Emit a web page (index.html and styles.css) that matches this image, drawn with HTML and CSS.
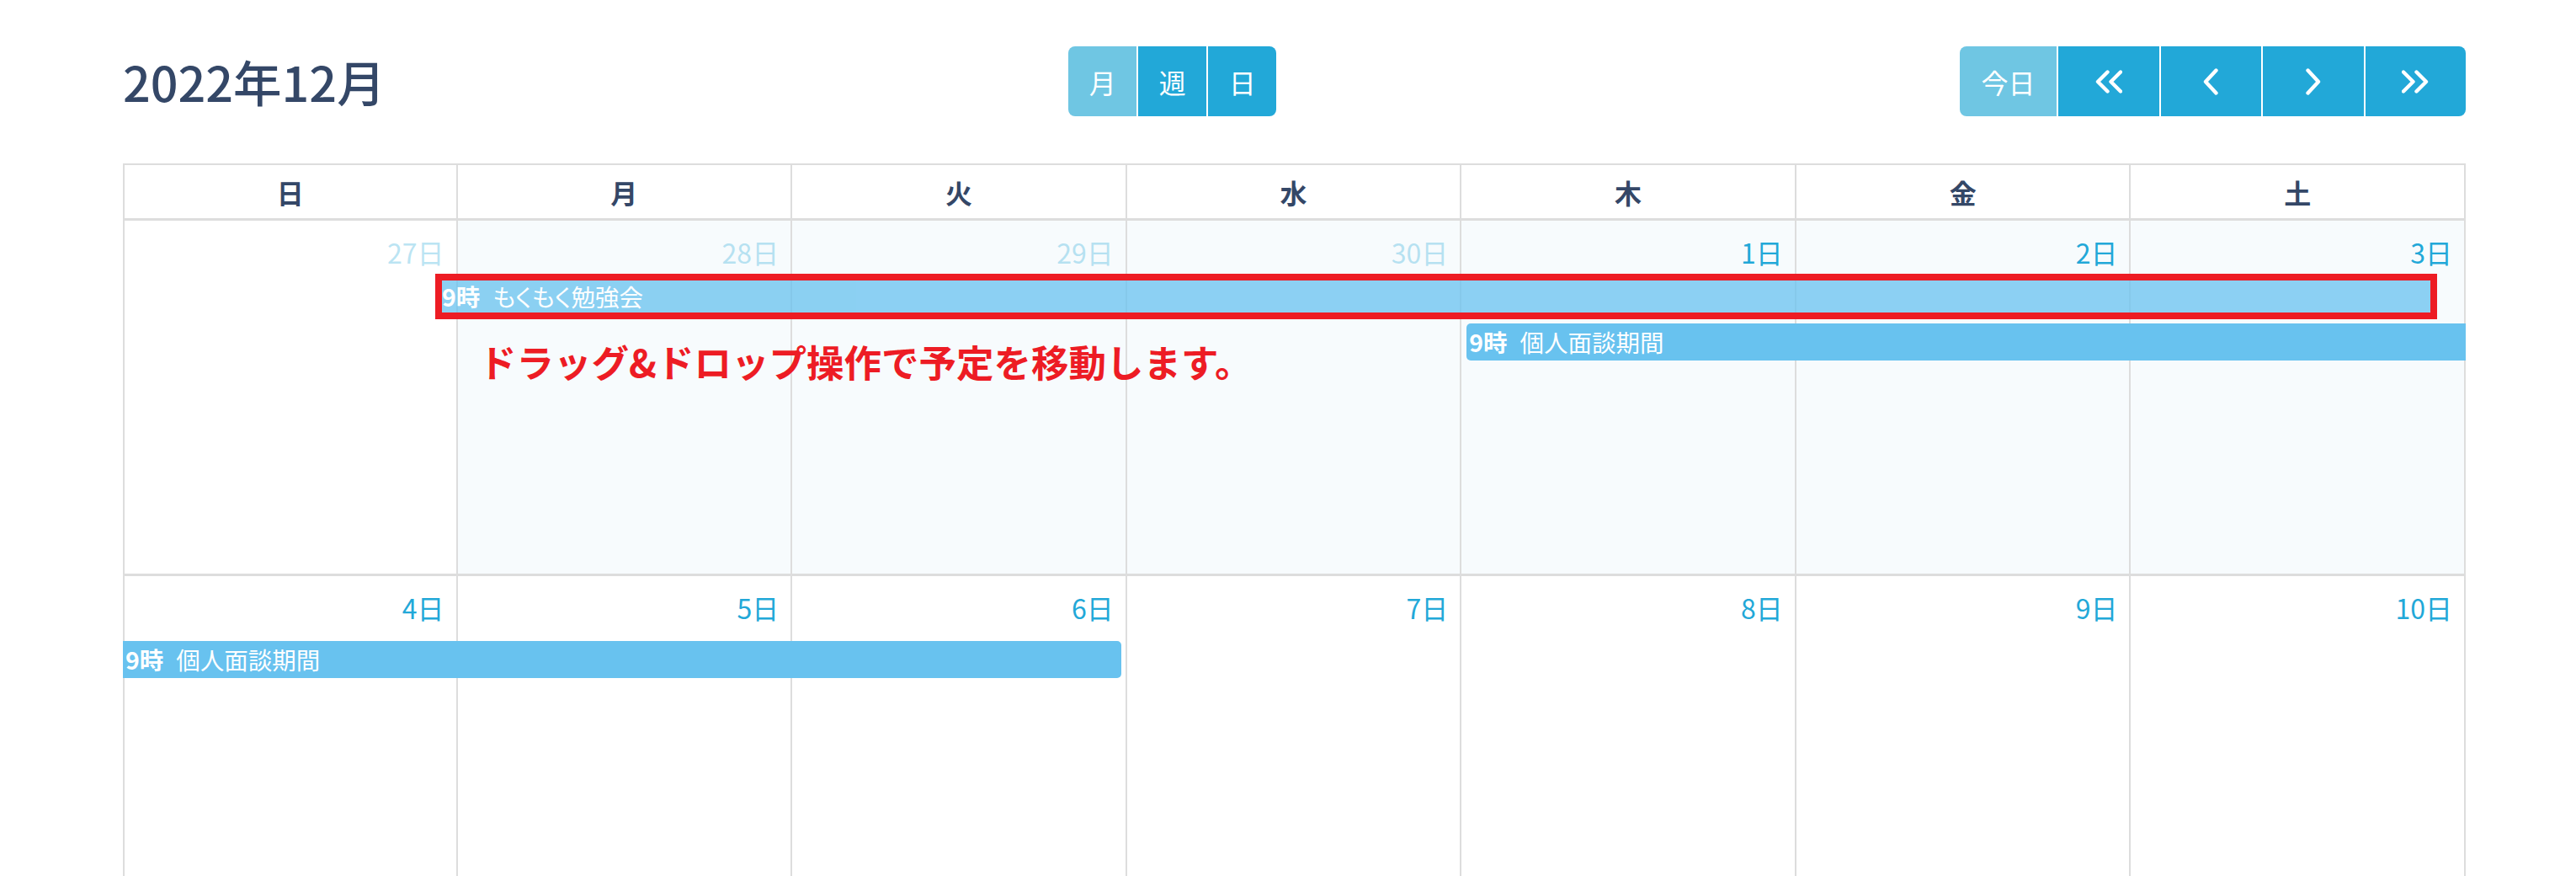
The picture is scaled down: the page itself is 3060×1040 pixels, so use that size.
FILE: index.html
```html
<!DOCTYPE html>
<html lang="ja">
<head>
<meta charset="utf-8">
<title>カレンダー</title>
<link rel="stylesheet" href="styles.css">
</head>
<body>
<div class="page">
  <div class="toolbar">
    <h2 class="title">2022年12月</h2>
    <div class="btn-group views">
      <button class="btn light">月</button><button class="btn">週</button><button class="btn">日</button>
    </div>
    <div class="btn-group nav">
      <button class="btn light today">今日</button>
      <button class="btn icon" aria-label="前年"><svg width="32" height="28" viewBox="0 0 32 28"><path d="M14.5 2.5 L3 14 L14.5 25.5 M30 2.5 L18.5 14 L30 25.5" fill="none" stroke="#fff" stroke-width="4.4" stroke-linecap="round" stroke-linejoin="round"/></svg></button>
      <button class="btn icon" aria-label="前月"><svg width="18" height="32" viewBox="0 0 18 32"><path d="M15.5 2.5 L3 16 L15.5 29.5" fill="none" stroke="#fff" stroke-width="4.4" stroke-linecap="round" stroke-linejoin="round"/></svg></button>
      <button class="btn icon" aria-label="次月"><svg width="18" height="32" viewBox="0 0 18 32"><path d="M2.5 2.5 L15 16 L2.5 29.5" fill="none" stroke="#fff" stroke-width="4.4" stroke-linecap="round" stroke-linejoin="round"/></svg></button>
      <button class="btn icon" aria-label="次年"><svg width="32" height="28" viewBox="0 0 32 28"><path d="M2 2.5 L13.5 14 L2 25.5 M17.5 2.5 L29 14 L17.5 25.5" fill="none" stroke="#fff" stroke-width="4.4" stroke-linecap="round" stroke-linejoin="round"/></svg></button>
    </div>
  </div>

  <div class="cal">
    <div class="head">
      <div class="th">日</div><div class="th">月</div><div class="th">火</div><div class="th">水</div><div class="th">木</div><div class="th">金</div><div class="th">土</div>
    </div>

    <div class="week">
      <div class="day"><span class="num other">27日</span></div>
      <div class="day hl"><span class="num other">28日</span></div>
      <div class="day hl"><span class="num other">29日</span></div>
      <div class="day hl"><span class="num other">30日</span></div>
      <div class="day hl"><span class="num">1日</span></div>
      <div class="day hl"><span class="num">2日</span></div>
      <div class="day hl"><span class="num">3日</span></div>
      <div class="event slot2 from-thu start"><b class="time">9時</b><span class="ttl">個人面談期間</span></div>
    </div>

    <div class="week">
      <div class="day"><span class="num">4日</span></div>
      <div class="day"><span class="num">5日</span></div>
      <div class="day"><span class="num">6日</span></div>
      <div class="day"><span class="num">7日</span></div>
      <div class="day"><span class="num">8日</span></div>
      <div class="day"><span class="num">9日</span></div>
      <div class="day"><span class="num">10日</span></div>
      <div class="event slot1 to-sat end"><b class="time">9時</b><span class="ttl">個人面談期間</span></div>
    </div>
  </div>

  <div class="mirror"><b class="time">9時</b><span class="ttl">もくもく勉強会</span></div>
  <div class="annot-box"></div>
  <div class="annot-text">ドラッグ&amp;ドロップ操作で予定を移動します。</div>
</div>
</body>
</html>
```

FILE: styles.css
```css
html, body {
  margin: 0;
  padding: 0;
  background: #fff;
}

body {
  font-family: "Noto Sans CJK JP", "Noto Sans", sans-serif;
  color: #344767;
  overflow: hidden;
}

.page {
  position: relative;
  padding: 55px 131px 0 146px;
  height: 985px;
  overflow: hidden;
}

/* toolbar */
.toolbar {
  display: flex;
  justify-content: space-between;
  align-items: center;
  height: 83px;
  margin-bottom: 56px;
}

.title {
  margin: 0;
  font-size: 57.5px;
  font-weight: 500;
  line-height: 1.2;
  color: #344767;
}

.btn-group {
  display: flex;
  gap: 2px;
  height: 83px;
}

.btn {
  border: none;
  margin: 0;
  padding: 0;
  height: 83px;
  background: #22a8d8;
  color: #fff;
  font-family: "Noto Sans CJK JP", sans-serif;
  font-size: 32px;
  line-height: 1;
  display: flex;
  align-items: center;
  justify-content: center;
}

.views .btn {
  width: 81px;
}

.btn.light {
  background: #6fc6e3;
}

.btn-group .btn:first-child {
  border-radius: 8px 0 0 8px;
}

.btn-group .btn:last-child {
  border-radius: 0 8px 8px 0;
}

.nav .today {
  width: 115px;
}

.nav .icon {
  width: 119.5px;
}

.btn svg {
  display: block;
}

/* calendar */
.cal {
  width: 2783px;
}

.head {
  display: grid;
  grid-template-columns: repeat(7, minmax(0, 1fr));
  border-top: 2px solid #ddd;
  border-bottom: 3px solid #ddd;
}

.th {
  height: 63px;
  display: flex;
  align-items: center;
  justify-content: center;
  font-size: 32px;
  font-weight: 700;
  color: #344767;
  border-right: 2px solid #ddd;
}

.th:first-child {
  border-left: 2px solid #ddd;
}

.week {
  display: grid;
  grid-template-columns: repeat(7, minmax(0, 1fr));
  grid-template-rows: 77px 45px 45px 1fr;
  height: 419px;
  border-bottom: 3px solid #ddd;
}

.day {
  grid-row: 1 / -1;
  border-right: 2px solid #ddd;
  display: flex;
  justify-content: flex-end;
  align-items: flex-start;
  padding: 13px 14px 0 0;
  min-width: 0;
}

.day:nth-child(1) { grid-column: 1; border-left: 2px solid #ddd; }
.day:nth-child(2) { grid-column: 2; }
.day:nth-child(3) { grid-column: 3; }
.day:nth-child(4) { grid-column: 4; }
.day:nth-child(5) { grid-column: 5; }
.day:nth-child(6) { grid-column: 6; }
.day:nth-child(7) { grid-column: 7; }

.day.hl {
  background: #f7fbfd;
}

.num {
  font-size: 32px;
  line-height: 48px;
  color: #22a8d8;
}

.num.other {
  opacity: 0.3;
}

/* events */
.event,
.mirror {
  height: 44px;
  background: #68c2ef;
  color: #fff;
  font-size: 28.5px;
  font-feature-settings: "palt";
  line-height: 44px;
  white-space: nowrap;
  overflow: hidden;
  display: flex;
  align-items: center;
  padding: 0 3px;
  box-sizing: border-box;
  min-width: 0;
}

.event {
  align-self: start;
  z-index: 1;
}

.slot1 { grid-row: 2; }
.slot2 { grid-row: 3; }

.from-thu { grid-column: 5 / 8; margin-left: 6px; }
.to-sat { grid-column: 1 / 4; margin-right: 7px; }

.event.start { border-radius: 5px 0 0 5px; }
.event.end { border-radius: 0 5px 5px 0; }

.time {
  font-weight: 700;
  margin-right: 15px;
}

/* dragged mirror & annotation overlays */
.mirror {
  position: absolute;
  left: 522px;
  top: 330px;
  width: 2365px;
  opacity: 0.75;
  border-radius: 5px;
  z-index: 3;
}

.annot-box {
  position: absolute;
  left: 517px;
  top: 325px;
  width: 2378px;
  height: 54px;
  box-sizing: border-box;
  border: 8px solid #ed1c24;
  z-index: 4;
}

.annot-text {
  position: absolute;
  left: 569px;
  top: 402px;
  font-size: 44.5px;
  line-height: 54px;
  font-weight: 700;
  color: #ed1c24;
  white-space: nowrap;
  z-index: 4;
}
```
